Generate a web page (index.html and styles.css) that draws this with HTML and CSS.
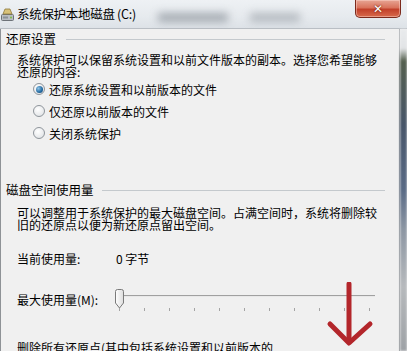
FILE: index.html
```html
<!DOCTYPE html>
<html lang="zh-CN">
<head>
<meta charset="utf-8">
<title>系统保护本地磁盘 (C:)</title>
<link rel="stylesheet" href="styles.css">
</head>
<body>
<div class="window">
  <div class="titlebar">
    <svg class="title-icon" width="13" height="14" viewBox="0 0 13 14">
      <rect x="0.5" y="6.5" width="12" height="6" rx="1" fill="#b9bdc2" stroke="#6d7278"/>
      <rect x="2" y="8.5" width="5" height="2" fill="#8c9197"/>
      <circle cx="10" cy="9.5" r="1" fill="#7bc043"/>
      <path d="M2 6 L4 1 L9 1 L11 6 Z" fill="#d8c27a" stroke="#8f7a3a" stroke-width="0.8"/>
    </svg>
    <span class="title-text">系统保护本地磁盘 (C:)</span>
    <div class="title-blur">
      <span class="blur b1"></span><span class="blur b2"></span>
    </div>
    <div class="close-btn"><span class="close-x">✕</span></div>
  </div>
  <div class="main">
    <div class="panel">
      <div class="group-head"><span>还原设置</span><span class="rule"></span></div>
      <p class="para">系统保护可以保留系统设置和以前文件版本的副本。选择您希望能够还原的内容:</p>
      <div class="radios">
        <div class="radio-row"><span class="radio checked"></span><span>还原系统设置和以前版本的文件</span></div>
        <div class="radio-row"><span class="radio"></span><span>仅还原以前版本的文件</span></div>
        <div class="radio-row"><span class="radio"></span><span>关闭系统保护</span></div>
      </div>
      <div class="group-head second"><span>磁盘空间使用量</span><span class="rule"></span></div>
      <p class="para para2">可以调整用于系统保护的最大磁盘空间。占满空间时，系统将删除较旧的还原点以便为新还原点留出空间。</p>
      <div class="kv usage"><span>当前使用量:</span><span>0 字节</span></div>
      <div class="kv slider-row">
        <span>最大使用量(M):</span>
        <div class="slider">
          <div class="track"></div>
          <div class="ticks">
            <i></i><i></i><i></i><i></i><i></i><i></i><i></i><i></i><i></i><i></i><i></i>
          </div>
          <svg class="thumb" width="11" height="20" viewBox="0 0 11 20">
            <defs>
              <linearGradient id="tg" x1="0" x2="1" y1="0" y2="0">
                <stop offset="0" stop-color="#ffffff"/>
                <stop offset="1" stop-color="#dcdcdc"/>
              </linearGradient>
            </defs>
            <path d="M1.5 2.5 Q1.5 0.5 3.5 0.5 L7.5 0.5 Q9.5 0.5 9.5 2.5 L9.5 14 L5.5 19 L1.5 14 Z" fill="url(#tg)" stroke="#7a7a7a"/>
          </svg>
        </div>
      </div>
      <div class="delete-row">
        <span>删除所有还原点(其中包括系统设置和以前版本的</span>
        <div class="btn"></div>
      </div>
      <svg class="arrow" width="50" height="66" viewBox="0 0 50 66">
        <path d="M24 2 L24 58" stroke="#b3262b" stroke-width="5" stroke-linecap="round" fill="none"/>
        <path d="M5 42 L24 61 L45 42" stroke="#b3262b" stroke-width="5" stroke-linecap="round" stroke-linejoin="round" fill="none"/>
      </svg>
    </div>
    <div class="frame-edge"></div>
  </div>
</div>
</body>
</html>
```

FILE: styles.css
```css
* { box-sizing: border-box; margin: 0; padding: 0; }
html, body { width: 407px; height: 351px; overflow: hidden; }
body {
  background: #f0f0f0;
  font-family: "Noto Sans CJK SC", "Microsoft YaHei", "DejaVu Sans", sans-serif;
  font-size: 12px;
  color: #000;
}
.window {
  width: 407px;
  height: 351px;
  display: flex;
  flex-direction: column;
  overflow: hidden;
}
.titlebar {
  position: relative;
  height: 29px;
  flex: none;
  display: flex;
  align-items: center;
  padding: 0 0 0 1px;
  background: linear-gradient(to bottom, #eef1f4 0%, #e6eaee 60%, #dde2e7 100%);
  border-bottom: 1px solid #b9bec4;
}
.title-icon { flex: none; margin-top: 2px; }
.title-text {
  margin-left: 3px;
  font-size: 12.5px;
  color: #000;
  line-height: 14px;
  letter-spacing: -0.3px;
}
.title-blur {
  flex: 1;
  display: flex;
  align-items: center;
  gap: 22px;
  padding-left: 22px;
  padding-top: 6px;
  height: 100%;
}
.blur {
  display: block;
  height: 9px;
  background: #8d949c;
  filter: blur(4px);
  opacity: 0.75;
}
.b1 { width: 70px; }
.b2 { width: 50px; background: #a3a9b0; }
.close-btn {
  position: absolute;
  right: 6px;
  top: 0;
  width: 46px;
  height: 18px;
  border: 1px solid #7c2a1c;
  border-top: none;
  border-radius: 0 0 5px 5px;
  background: linear-gradient(to bottom, #e7a594 0%, #d9735c 45%, #c2402a 55%, #d86a4c 100%);
  display: flex;
  align-items: center;
  justify-content: center;
  box-shadow: inset 0 0 0 1px rgba(255,220,210,0.45);
}
.close-x {
  color: #fff;
  font-family: "DejaVu Sans", sans-serif;
  font-size: 12px;
  font-weight: bold;
  line-height: 12px;
  text-shadow: 0 0 2px #7a2010, 0 0 1px #7a2010;
}
.main {
  flex: 1;
  display: flex;
  min-height: 0;
}
.panel {
  position: relative;
  flex: 1;
  background: #f0f0f0;
  border-left: 1px solid #8e9296;
  border-right: 1px solid #a7aaad;
  padding: 3px 14px 0 5px;
  display: flex;
  flex-direction: column;
}
.frame-edge {
  width: 7px;
  flex: none;
  background: linear-gradient(to bottom, #e9ebed 0%, #e2e4e6 6%, #55604f 10%, #48566a 30%, #5a6b86 50%, #8c96a3 62%, #b7babd 80%, #9ea2a6 100%);
  filter: blur(1px);
}
.group-head {
  display: flex;
  align-items: center;
  height: 14px;
  line-height: 14px;
  font-size: 12.5px;
}
.group-head .rule {
  flex: 1;
  height: 1px;
  background: #c4c9cd;
  margin-left: 10px;
  margin-top: 1px;
}
.group-head.second { margin-top: 40px; }
.group-head.second .rule { margin-left: 8px; }
.para {
  margin-top: 8px;
  margin-left: 11px;
  line-height: 11.5px;
  padding-right: 6px;
}
.para2 { margin-top: 10px; }
.radios {
  display: flex;
  flex-direction: column;
  gap: 2px;
  margin-top: 2px;
  margin-left: 27px;
}
.radio-row {
  height: 20px;
  display: flex;
  align-items: center;
  gap: 4px;
}
.radio {
  width: 12px;
  height: 12px;
  border-radius: 50%;
  border: 1px solid #8f959b;
  background: radial-gradient(circle at 40% 35%, #ffffff 0%, #e6e8ea 70%, #d0d4d8 100%);
  display: flex;
  align-items: center;
  justify-content: center;
}
.radio.checked::after {
  content: "";
  width: 7px;
  height: 7px;
  border-radius: 50%;
  background: radial-gradient(circle at 35% 35%, #8fc4e8 0%, #22699f 60%, #173f6a 100%);
}
.kv {
  display: grid;
  grid-template-columns: 97px auto;
  margin-left: 11px;
  align-items: center;
}
.usage { margin-top: 23px; line-height: 12px; }
.usage span:last-child { padding-left: 2px; }
.slider-row {
  margin-top: 22px;
  height: 24px;
}
.slider {
  position: relative;
  height: 24px;
  width: 261px;
}
.track {
  position: absolute;
  left: 8px;
  right: 0;
  top: 8px;
  height: 2px;
  border-top: 1px solid #a0a0a0;
  border-bottom: 1px solid #e8e8e8;
}
.ticks {
  position: absolute;
  left: 5px;
  top: 21px;
  display: flex;
  gap: 24px;
}
.ticks i {
  display: block;
  width: 1px;
  height: 3px;
  background: #a4a4a4;
}
.thumb {
  position: absolute;
  left: 0;
  top: 2px;
}
.delete-row {
  margin-top: 31px;
  margin-left: 11px;
  display: flex;
  justify-content: space-between;
  line-height: 12px;
}
.btn {
  width: 70px;
  height: 20px;
  margin-top: 9px;
  margin-right: 3px;
  border: 1px solid #707070;
  border-radius: 3px;
  background: linear-gradient(#f2f2f2, #e0e0e0);
  flex: none;
}
.arrow {
  position: absolute;
  left: 324px;
  top: 253px;
}
```
